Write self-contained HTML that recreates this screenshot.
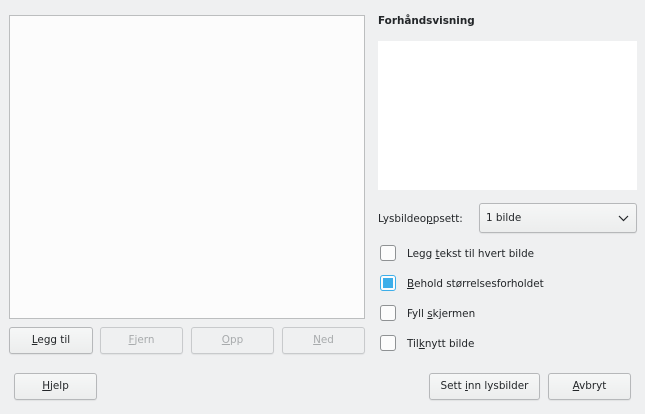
<!DOCTYPE html>
<html><head><meta charset="utf-8"><style>
body{margin:0;width:645px;height:414px;background:#eff0f1;font-family:"DejaVu Sans","Liberation Sans",sans-serif;font-size:10.4px;color:#232629;position:relative;overflow:hidden}
.a{position:absolute;box-sizing:border-box}
.list{left:9px;top:15px;width:356px;height:304px;background:#fcfcfc;border:1px solid #bcbebf}
.btn{height:27px;border:1px solid #b6b8ba;border-radius:3px;background:linear-gradient(#f6f7f7,#eceded);text-align:center;line-height:25px;box-shadow:0 1px 1px rgba(0,0,0,.06)}
.dis{color:#a8abad;border-color:#c8cacc;background:#eff0f1}
u{text-decoration:underline}
.cb{width:16px;height:16px;border:1px solid #8f9294;border-radius:3px;background:#fcfcfc;left:380px}
.lbl{left:407px;line-height:14px}
</style></head><body>
<div class="a list"></div>
<div class="a btn" style="left:9px;top:327px;width:84px"><u>L</u>egg til</div>
<div class="a btn dis" style="left:100px;top:327px;width:83px"><u>F</u>jern</div>
<div class="a btn dis" style="left:191px;top:327px;width:83px"><u>O</u>pp</div>
<div class="a btn dis" style="left:282px;top:327px;width:83px"><u>N</u>ed</div>
<div class="a btn" style="left:14px;top:373px;width:83px"><u>H</u>jelp</div>
<div class="a" style="left:378px;top:14px;font-weight:bold;line-height:14px">Forhåndsvisning</div>
<div class="a" style="left:378px;top:41px;width:259px;height:149px;background:#fff"></div>
<div class="a" style="left:378px;top:212px;line-height:14px">Lysbildeo<u>p</u>psett:</div>
<div class="a btn" style="left:479px;top:203px;width:158px;height:30px;text-align:left;padding-left:6px;line-height:28px">1 bilde
<svg style="position:absolute;right:7px;top:11px" width="11" height="7"><path d="M1 1L5.5 5.5L10 1" fill="none" stroke="#232629" stroke-width="1.2"/></svg></div>
<div class="a cb" style="top:245px"></div><div class="a lbl" style="top:247px">Legg <u>t</u>ekst til hvert bilde</div>
<div class="a cb" style="top:275px;border-color:#3daee9;padding:2px"><div style="width:10px;height:10px;background:#3daee9"></div></div><div class="a lbl" style="top:277px"><u>B</u>ehold størrelsesforholdet</div>
<div class="a cb" style="top:305px"></div><div class="a lbl" style="top:307px">Fyll <u>s</u>kjermen</div>
<div class="a cb" style="top:335px"></div><div class="a lbl" style="top:337px">Til<u>k</u>nytt bilde</div>
<div class="a btn" style="left:429px;top:373px;width:111px">Sett <u>i</u>nn lysbilder</div>
<div class="a btn" style="left:548px;top:373px;width:83px"><u>A</u>vbryt</div>
</body></html>
